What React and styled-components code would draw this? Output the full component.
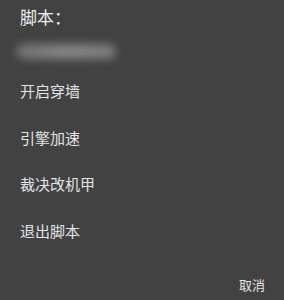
import React from "react";
import styled, { createGlobalStyle } from "styled-components";

const Global = createGlobalStyle`
  html, body {
    margin: 0;
    padding: 0;
    background: #424242;
  }
`;

const Dialog = styled.div`
  width: 284px;
  height: 300px;
  box-sizing: border-box;
  background: #424242;
  color: #e6e6e6;
  font-family: "Noto Sans CJK SC", "Noto Sans", sans-serif;
  display: flex;
  flex-direction: column;
  padding: 6px 0 0 20px;
  overflow: hidden;
`;

const Title = styled.div`
  font-size: 17px;
  line-height: 22px;
  color: #ececec;
`;

const Blurred = styled.div`
  margin: 16px 0 0 -4px;
  width: 100px;
  height: 15px;
  border-radius: 8px;
  background: linear-gradient(90deg, #727272, #858585 50%, #7a7a7a);
  filter: blur(4px);
`;

const Menu = styled.div`
  display: flex;
  flex-direction: column;
  margin-top: 21px;
`;

const Item = styled.div`
  font-size: 15px;
  line-height: 22px;
  height: 46.5px;
  color: #e4e4e4;
`;

const Footer = styled.div`
  margin-top: auto;
  display: flex;
  justify-content: flex-end;
  padding: 0 19px 6px 0;
`;

const Cancel = styled.div`
  font-size: 13px;
  line-height: 18px;
  color: #e4e4e4;
`;

export default function App() {
  const items = ["开启穿墙", "引擎加速", "裁决改机甲", "退出脚本"];
  return (
    <>
      <Global />
      <Dialog>
        <Title>脚本：</Title>
        <Blurred />
        <Menu>
          {items.map((t) => (
            <Item key={t}>{t}</Item>
          ))}
        </Menu>
        <Footer>
          <Cancel>取消</Cancel>
        </Footer>
      </Dialog>
    </>
  );
}
